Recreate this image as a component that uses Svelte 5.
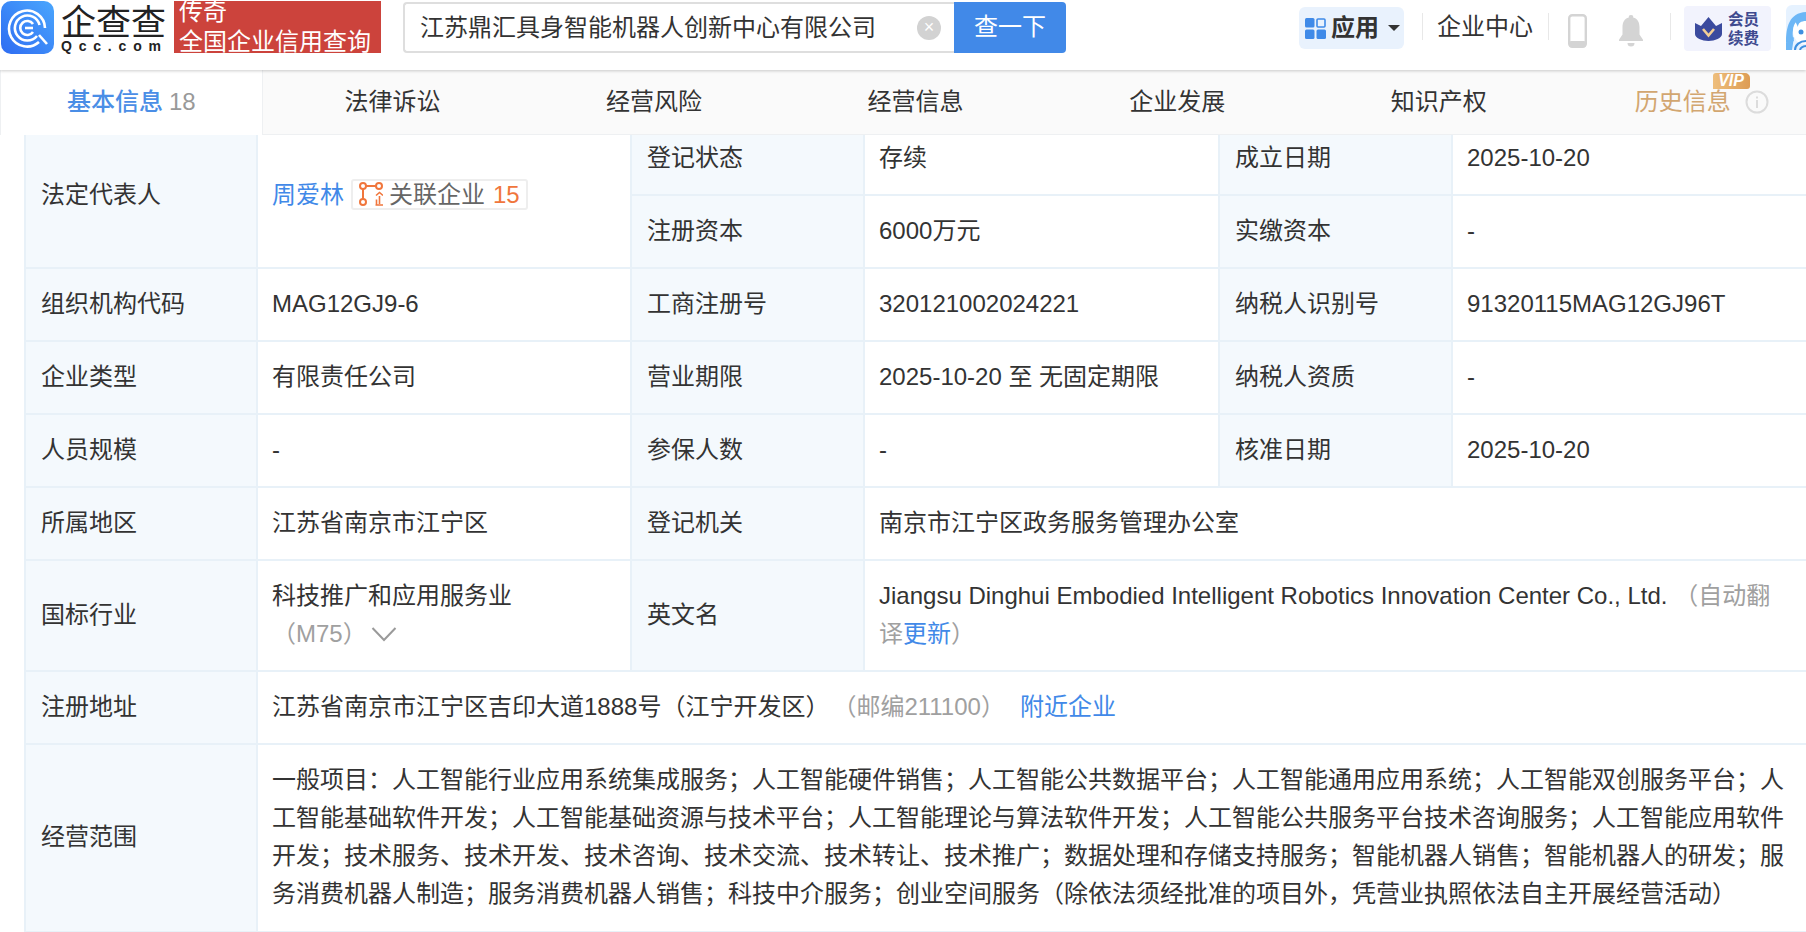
<script>
  const tabs = ['法律诉讼', '经营风险', '经营信息', '企业发展', '知识产权'];
  const wmLines = Array.from({ length: 16 }, (_, i) => i);
</script>

<div class="page">
  <header class="topbar">
    <svg class="logo" viewBox="0 0 53 53" aria-hidden="true">
      <defs>
        <linearGradient id="lg" x1="0" y1="1" x2="1" y2="0">
          <stop offset="0" stop-color="#2e6cf2" />
          <stop offset="1" stop-color="#4aa6fd" />
        </linearGradient>
      </defs>
      <rect width="53" height="53" rx="10" fill="url(#lg)" />
      <path d="M38 41 A18 18 0 1 1 44 27" fill="none" stroke="#fff" stroke-width="2.6" />
      <path d="M38 34 L46 43" fill="none" stroke="#fff" stroke-width="2.6" />
      <path d="M36 35 A12.5 12.5 0 1 1 38.5 24" fill="none" stroke="#fff" stroke-width="2.6" />
      <path d="M32 31 A7 7 0 1 1 32 23" fill="none" stroke="#fff" stroke-width="2.6" />
      <path d="M24 27 H32" stroke="#fff" stroke-width="2.6" />
    </svg>
    <div class="brand">
      <div class="brand-cn">企查查</div>
      <div class="brand-en">Qcc.com</div>
    </div>
    <div class="promo">传奇<br />全国企业信用查询</div>
    <div class="search">
      <div class="search-box">
        <span class="search-text">江苏鼎汇具身智能机器人创新中心有限公司</span>
        <span class="clear">×</span>
      </div>
      <div class="search-btn">查一下</div>
    </div>
    <div class="right">
      <div class="apps">
        <svg class="apps-ic" viewBox="0 0 21 21" aria-hidden="true">
          <rect x="0" y="0" width="9.5" height="9.5" rx="1.5" fill="#3f8ae8" />
          <rect x="12" y="1" width="8" height="8" rx="1" fill="none" stroke="#3f8ae8" stroke-width="1.6" />
          <rect x="0" y="11.5" width="9.5" height="9.5" rx="1.5" fill="#3f8ae8" />
          <rect x="11.5" y="11.5" width="9.5" height="9.5" rx="1.5" fill="#3f8ae8" />
        </svg>
        <span>应用</span>
        <i class="caret"></i>
      </div>
      <i class="sep s1"></i>
      <span class="center">企业中心</span>
      <i class="sep s2"></i>
      <svg class="phone" viewBox="0 0 19 34" aria-hidden="true">
        <rect x="1.2" y="1.2" width="16.6" height="31.6" rx="3" fill="none" stroke="#d4d4d4" stroke-width="2.4" />
        <rect x="1" y="27" width="17" height="6" rx="2" fill="#d4d4d4" />
      </svg>
      <svg class="bell" viewBox="0 0 24 33" aria-hidden="true">
        <path d="M12 1a2.2 2.2 0 0 1 2.2 2.4C18.6 4.6 20.5 8.4 20.5 13v7.5L24 25.8V27H0v-1.2l3.5-5.300V13c0-4.600 1.900-8.400 6.300-9.600A2.200 2.200 0 0 1 12 1z" fill="#d4d4d4" />
        <path d="M8.500 29h7a3.500 3.500 0 0 1-7 0z" fill="#d4d4d4" />
      </svg>
      <i class="sep s3"></i>
      <div class="vip">
        <svg class="crown" viewBox="0 0 27 24" aria-hidden="true">
          <path d="M0 6 L6 9 L13.500 0 L21 9 L27 6 V17 C27 21 20 24 13.500 24 C7 24 0 21 0 17 Z" fill="#3b4a9e" />
          <path d="M8 12 L13.500 18.500 L19 12" fill="none" stroke="#f3cf96" stroke-width="2.6" />
        </svg>
        <div class="vip-text">会员<br />续费</div>
      </div>
      <svg class="avatar" viewBox="0 0 20 45" aria-hidden="true">
        <rect width="40" height="45" rx="6" fill="#e6f2ff" />
        <path d="M0 38 C0 22 3 8 20 7 V14 C10 14 4 24 8 36 Z" fill="#6db7f6" />
        <path d="M0 38 L8 32 L6 45 H0 Z" fill="#6db7f6" />
        <ellipse cx="18" cy="26" rx="11" ry="13" fill="#ffffff" />
        <path d="M8 14 C12 9 16 8 20 8 V16 C15 16 12 18 12 22 Z" fill="#6db7f6" />
        <circle cx="15" cy="27" r="2.500" fill="#3d8fe0" />
        <path d="M9 45 A11 9 0 0 1 20 36 M14 45 A7 5 0 0 1 20 41" fill="none" stroke="#3d8fe0" stroke-width="2" />
      </svg>
    </div>
  </header>

  <nav class="tabs">
    <div class="tab active">基本信息 <span class="count">18</span></div>
    {#each tabs as t}
      <div class="tab">{t}</div>
    {/each}
    <div class="tab history">
      历史信息
      <span class="vipbadge">VIP</span>
      <svg class="info" viewBox="0 0 24 24" aria-hidden="true">
        <circle cx="12" cy="12" r="10.500" fill="none" stroke="#dcdcdc" stroke-width="2" />
        <rect x="11" y="10" width="2" height="8" fill="#dcdcdc" />
        <rect x="11" y="6.500" width="2" height="2" fill="#dcdcdc" />
      </svg>
    </div>
  </nav>

  <main class="content">
    <table>
      <colgroup>
        <col style="width:232px" /><col style="width:374px" /><col style="width:233px" />
        <col style="width:355px" /><col style="width:233px" /><col style="width:357px" />
      </colgroup>
      <tbody>
        <tr>
          <td class="l" rowspan="2">法定代表人</td>
          <td rowspan="2">
            <div class="rep">
              <a class="link">周爱林</a>
              <span class="tag">
                <svg class="tag-ic" viewBox="0 0 24 24" aria-hidden="true">
                  <g fill="none" stroke="#f0763c" stroke-width="2">
                    <circle cx="4" cy="4" r="3" /><circle cx="20" cy="4" r="3" /><circle cx="4" cy="20" r="3" />
                    <path d="M7 4 H17 M4 7 V17" />
                    <path d="M17 13.500 L20.500 10.500 L24 13.500 M20.500 14 V22 M16.500 23 H24 M17.500 17.500 V23" stroke-width="1.600" />
                  </g>
                </svg>
                <span class="tag-t">关联企业</span>
                <span class="orange">15</span>
              </span>
            </div>
          </td>
          <td class="l">登记状态</td><td>存续</td>
          <td class="l">成立日期</td><td>2025-10-20</td>
        </tr>
        <tr>
          <td class="l">注册资本</td><td>6000万元</td>
          <td class="l">实缴资本</td><td>-</td>
        </tr>
        <tr>
          <td class="l">组织机构代码</td><td>MAG12GJ9-6</td>
          <td class="l">工商注册号</td><td>320121002024221</td>
          <td class="l">纳税人识别号</td><td>91320115MAG12GJ96T</td>
        </tr>
        <tr>
          <td class="l">企业类型</td><td>有限责任公司</td>
          <td class="l">营业期限</td><td>2025-10-20 至 无固定期限</td>
          <td class="l">纳税人资质</td><td>-</td>
        </tr>
        <tr>
          <td class="l">人员规模</td><td>-</td>
          <td class="l">参保人数</td><td>-</td>
          <td class="l">核准日期</td><td>2025-10-20</td>
        </tr>
        <tr>
          <td class="l">所属地区</td><td>江苏省南京市江宁区</td>
          <td class="l">登记机关</td><td colspan="3">南京市江宁区政务服务管理办公室</td>
        </tr>
        <tr>
          <td class="l">国标行业</td>
          <td>科技推广和应用服务业<br /><span class="gray">（M75）</span><svg class="chev" viewBox="0 0 26 16" aria-hidden="true"><path d="M1.500 2 L13 14 L24.500 2" fill="none" stroke="#9a9a9a" stroke-width="2" /></svg></td>
          <td class="l">英文名</td>
          <td colspan="3">Jiangsu Dinghui Embodied Intelligent Robotics Innovation Center Co., Ltd. <span class="gray">（自动翻译</span><a class="link">更新</a><span class="gray">）</span></td>
        </tr>
        <tr>
          <td class="l">注册地址</td>
          <td colspan="5">江苏省南京市江宁区吉印大道1888号（江宁开发区）<span class="gray zip">（邮编211100）</span><a class="link near">附近企业</a></td>
        </tr>
        <tr class="last">
          <td class="l">经营范围</td>
          <td colspan="5">一般项目：人工智能行业应用系统集成服务；人工智能硬件销售；人工智能公共数据平台；人工智能通用应用系统；人工智能双创服务平台；人工智能基础软件开发；人工智能基础资源与技术平台；人工智能理论与算法软件开发；人工智能公共服务平台技术咨询服务；人工智能应用软件开发；技术服务、技术开发、技术咨询、技术交流、技术转让、技术推广；数据处理和存储支持服务；智能机器人销售；智能机器人的研发；服务消费机器人制造；服务消费机器人销售；科技中介服务；创业空间服务（除依法须经批准的项目外，凭营业执照依法自主开展经营活动）</td>
        </tr>
      </tbody>
    </table>
  </main>

  <div class="wm" aria-hidden="true">
    {#each wmLines as i}
      <div class="wm-line">E M U 3 Q D E E M U 3 Q D E E M U 3 Q D E E M U 3 Q D E E M U 3 Q D E E M U 3 Q D E</div>
    {/each}
  </div>
</div>

<style>
  :global(body) {
    margin: 0;
    background: #fff;
  }
  .page {
    position: relative;
    width: 1806px;
    height: 932px;
    overflow: hidden;
    display: flex;
    flex-direction: column;
    background: #fff;
    color: #333;
    font-family: "Liberation Sans", "Noto Sans CJK SC", sans-serif;
    font-size: 24px;
    line-height: 38px;
  }
  .topbar {
    flex: none;
    height: 70px;
    box-sizing: border-box;
    display: flex;
    align-items: flex-start;
    position: relative;
    z-index: 3;
    background: #fff;
    box-shadow: 0 1px 3px rgba(0, 0, 0, 0.2);
  }
  .logo {
    width: 53px;
    height: 53px;
    margin: 1px 0 0 1px;
    flex: none;
  }
  .brand {
    margin-left: 7px;
    width: 106px;
    flex: none;
    color: #222;
  }
  .brand-cn {
    font-size: 35px;
    line-height: 35px;
    margin-top: 5px;
    font-weight: 400;
    white-space: nowrap;
  }
  .brand-en {
    font-size: 14px;
    font-weight: 700;
    line-height: 14px;
    letter-spacing: 6.8px;
    margin-top: -1px;
    white-space: nowrap;
  }
  .promo {
    margin: 1px 0 0 7px;
    width: 207px;
    height: 52px;
    box-sizing: border-box;
    padding-left: 5px;
    flex: none;
    background: #cc433c;
    color: #fff;
    line-height: 30px;
    overflow: hidden;
    white-space: nowrap;
  }
  .promo::before {
    content: "";
    display: block;
    margin-top: -4px;
  }
  .search {
    margin: 2px 0 0 22px;
    display: flex;
    height: 51px;
    flex: none;
  }
  .search-box {
    width: 551px;
    box-sizing: border-box;
    border: 2px solid #dedede;
    border-right: 0;
    border-radius: 4px 0 0 4px;
    padding-left: 15px;
    display: flex;
    align-items: center;
    position: relative;
  }
  .search-text {
    white-space: nowrap;
  }
  .clear {
    position: absolute;
    left: 512px;
    top: 12px;
    width: 24px;
    height: 24px;
    border-radius: 50%;
    background: #d2d2d2;
    color: #fff;
    font-size: 18px;
    line-height: 23px;
    text-align: center;
  }
  .search-btn {
    width: 112px;
    background: #4189e8;
    color: #fff;
    text-align: center;
    line-height: 49px;
    border-radius: 0 4px 4px 0;
  }
  .right {
    margin-left: 233px;
    display: flex;
    align-items: flex-start;
    flex: none;
    height: 70px;
  }
  .apps {
    width: 105px;
    height: 42px;
    margin-top: 7px;
    box-sizing: border-box;
    padding-left: 6px;
    background: #e9f2fd;
    border-radius: 6px;
    display: flex;
    align-items: center;
    font-weight: 700;
    color: #333;
    white-space: nowrap;
  }
  .apps-ic {
    width: 21px;
    height: 21px;
    margin-right: 5px;
    flex: none;
  }
  .caret {
    margin-left: 9px;
    border-left: 6px solid transparent;
    border-right: 6px solid transparent;
    border-top: 6px solid #333;
  }
  .sep {
    width: 1px;
    height: 27px;
    margin-top: 13px;
    background: #e8e8e8;
    flex: none;
  }
  .s1 {
    margin-left: 18px;
  }
  .center {
    margin: 8px 0 0 14px;
    white-space: nowrap;
  }
  .s2 {
    margin-left: 15px;
  }
  .phone {
    width: 19px;
    height: 34px;
    margin: 14px 0 0 19px;
    flex: none;
  }
  .bell {
    width: 24px;
    height: 33px;
    margin: 14px 0 0 32px;
    flex: none;
  }
  .s3 {
    margin-left: 27px;
  }
  .vip {
    width: 87px;
    height: 45px;
    margin: 6px 0 0 13px;
    background: #f2f3fd;
    border-radius: 4px;
    display: flex;
    align-items: center;
    flex: none;
  }
  .crown {
    width: 27px;
    height: 24px;
    margin-left: 11px;
    flex: none;
  }
  .vip-text {
    margin-left: 6px;
    font-size: 15.5px;
    line-height: 19px;
    font-weight: 700;
    color: #3f4a8f;
  }
  .avatar {
    width: 20px;
    height: 45px;
    margin: 5px 0 0 15px;
    flex: none;
  }
  .tabs {
    flex: none;
    height: 65px;
    display: flex;
    position: relative;
    z-index: 2;
    background: #fafafa;
    box-shadow: inset 0 -1px 0 #eef0f2;
  }
  .tab {
    flex: 0 0 261.6px;
    box-sizing: border-box;
    display: flex;
    gap: 8px;
    align-items: center;
    justify-content: center;
    white-space: nowrap;
    position: relative;
    padding-bottom: 2px;
  }
  .tab.active {
    background: #fff;
    color: #4a8ee6;
    font-weight: 500;
    flex-basis: 262.6px;
    gap: 6px;
    border-right: 1px solid #eef0f2;
    border-left: 1px solid #eef0f2;
    margin-right: -1px;
  }
  .count {
    color: #999;
    font-weight: 400;
  }
  .history {
    color: #d2a670;
    gap: 14px;
    padding-left: 3px;
  }
  .vipbadge {
    position: absolute;
    left: 143px;
    top: 3px;
    width: 37px;
    height: 16px;
    border-radius: 3px 5px 3px 0;
    background: linear-gradient(90deg, #eebe7c, #dd9c54);
    color: #fff;
    font-size: 16px;
    line-height: 16px;
    font-weight: 700;
    font-style: italic;
    text-align: center;
  }
  .info {
    width: 24px;
    height: 24px;
    flex: none;
  }
  .content {
    flex: 1;
    min-height: 0;
    overflow: hidden;
    position: relative;
    z-index: 1;
  }
  table {
    table-layout: fixed;
    border-collapse: collapse;
    width: 1784px;
    margin: -14px 0 0 24px;
  }
  td {
    border: 2px solid #e8f1f8;
    padding: 16px 14px 17px;
    vertical-align: middle;
  }
  .last td {
    padding-bottom: 18px;
  }
  td.l {
    background: #f4f9fd;
    padding-left: 15px;
  }
  .rep {
    display: flex;
    align-items: flex-start;
  }
  .link {
    color: #4189e8;
  }
  .tag {
    margin-left: 7px;
    height: 31px;
    box-sizing: border-box;
    margin-top: 3px;
    border: 2px solid #eeeeee;
    border-radius: 3px;
    padding: 0 6px;
    display: flex;
    align-items: center;
    white-space: nowrap;
    line-height: 31px;
  }
  .tag-ic {
    width: 24px;
    height: 24px;
    flex: none;
  }
  .tag-t {
    margin-left: 6px;
    color: #666;
  }
  .orange {
    margin-left: 8px;
    color: #f0763c;
  }
  .gray {
    color: #a0a0a0;
  }
  .zip {
    margin-left: 15px;
  }
  .chev {
    width: 26px;
    height: 16px;
    margin-left: 4px;
  }
  .near {
    margin-left: 15px;
  }
  .wm {
    position: absolute;
    z-index: 4;
    left: -500px;
    top: -1000px;
    width: 3400px;
    transform: rotate(-45deg);
    transform-origin: 50% 50%;
    pointer-events: none;
    color: rgba(0, 0, 0, 0.016);
    font-size: 24px;
    letter-spacing: 18px;
    white-space: pre;
  }
  .wm-line {
    margin-bottom: 130px;
    height: 30px;
    line-height: 30px;
  }
</style>
